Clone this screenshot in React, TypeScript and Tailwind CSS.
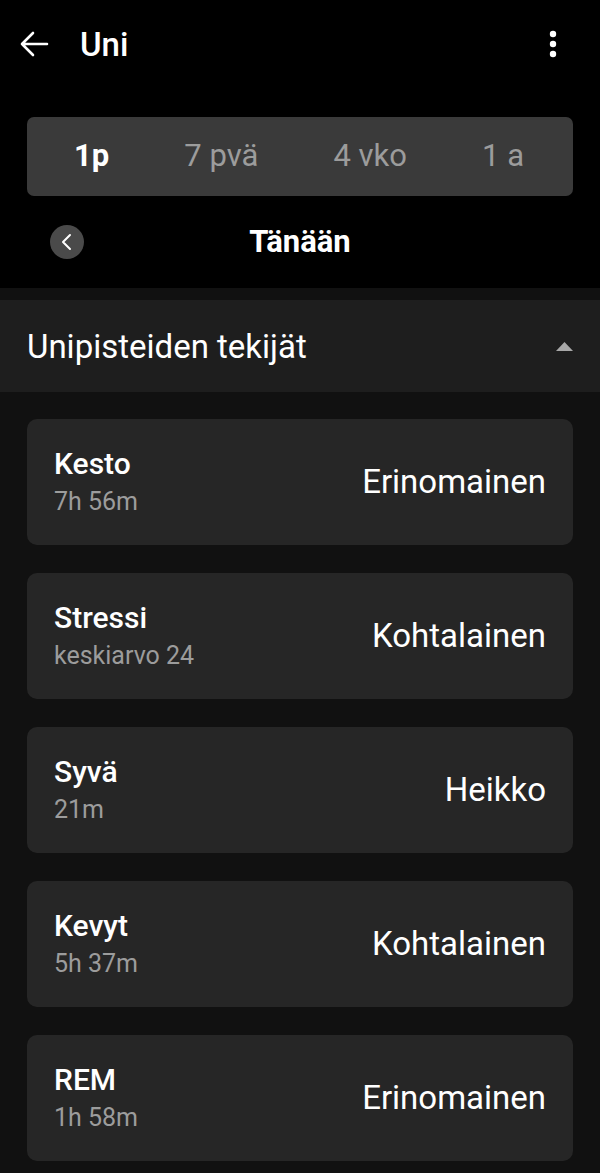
import React from "react";

const items = [
  { t: "Kesto", s: "7h 56m", r: "Erinomainen" },
  { t: "Stressi", s: "keskiarvo 24", r: "Kohtalainen" },
  { t: "Syvä", s: "21m", r: "Heikko" },
  { t: "Kevyt", s: "5h 37m", r: "Kohtalainen" },
  { t: "REM", s: "1h 58m", r: "Erinomainen" },
];

export default function App() {
  return (
    <div className="w-[600px] h-[1173px] overflow-hidden bg-[#111111] font-['Roboto',sans-serif] text-white">
      <div className="bg-black pb-[16px]">
        <div className="flex h-[88px] items-center pl-[18px] pr-[43px]">
          <svg width="32" height="32" viewBox="0 0 32 32" fill="none" stroke="white" strokeWidth="2.6" strokeLinecap="round" strokeLinejoin="round">
            <path d="M29 16H4M15 5L4 16l11 11" />
          </svg>
          <div className="ml-[30px] text-[33px] font-medium leading-none">Uni</div>
          <div className="flex-1" />
          <svg width="8" height="28" viewBox="0 0 8 28" fill="white">
            <circle cx="4" cy="4" r="3.2" />
            <circle cx="4" cy="14" r="3.2" />
            <circle cx="4" cy="24" r="3.2" />
          </svg>
        </div>
        <div className="mx-[27px] mt-[29px] flex h-[79px] items-center justify-between rounded-[7px] bg-[#3a3a3a] pl-[47px] pr-[49px] text-[31px] text-[#9c9c9c]">
          <span className="font-bold text-white">1p</span>
          <span>7 pvä</span>
          <span>4 vko</span>
          <span>1 a</span>
        </div>
        <div className="relative mt-[16px] flex h-[60px] items-center justify-center">
          <div className="absolute left-[50px] top-[13px] flex h-[34px] w-[34px] items-center justify-center rounded-full bg-[#4a4a4a]">
            <svg width="16" height="20" viewBox="0 0 16 20" fill="none" stroke="white" strokeWidth="2" strokeLinecap="round" strokeLinejoin="round">
              <path d="M11 3L4 10l7 7" />
            </svg>
          </div>
          <div className="text-[31px] font-bold">Tänään</div>
        </div>
      </div>
      <div className="mt-[12px] flex h-[92px] items-center justify-between bg-[#1e1e1e] pl-[27px] pr-[27px]">
        <div className="text-[33px] leading-none">Unipisteiden tekijät</div>
        <svg width="17" height="9" viewBox="0 0 17 9" fill="#a8a8a8">
          <path d="M8.5 0L17 9H0z" />
        </svg>
      </div>
      <div className="flex flex-col gap-[28px] px-[27px] pt-[27px]">
        {items.map((it) => (
          <div key={it.t} className="flex h-[126px] items-center justify-between rounded-[10px] bg-[#262626] pl-[27px] pr-[27px]">
            <div className="flex flex-col">
              <div className="text-[30px] font-medium leading-[40px]">{it.t}</div>
              <div className="text-[25px] leading-[36px] text-[#9c9c9c]">{it.s}</div>
            </div>
            <div className="text-[33px]">{it.r}</div>
          </div>
        ))}
      </div>
    </div>
  );
}
